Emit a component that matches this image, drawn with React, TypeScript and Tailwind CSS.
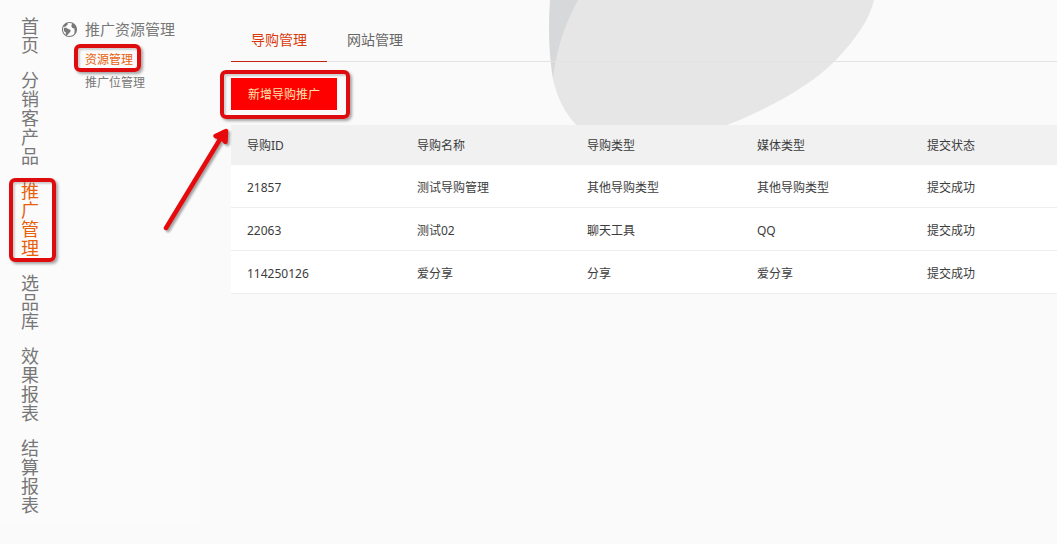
import { ImEarth } from "react-icons/im";

const mainNav = ["首页", "分销客产品", "推广管理", "选品库", "效果报表", "结算报表"];
const columns = ["导购ID", "导购名称", "导购类型", "媒体类型", "提交状态"];
const rows = [
  ["21857", "测试导购管理", "其他导购类型", "其他导购类型", "提交成功"],
  ["22063", "测试02", "聊天工具", "QQ", "提交成功"],
  ["114250126", "爱分享", "分享", "爱分享", "提交成功"],
];

const markClass =
  "pointer-events-none absolute rounded-md border-4 border-[#de0c0e] shadow-[2px_2px_3px_rgba(0,0,0,0.35),inset_2px_2px_2px_rgba(0,0,0,0.18)]";

function MainNav() {
  return (
    <nav aria-label="主导航" className="flex w-15 flex-col items-center gap-4 pt-[17px] pb-2">
      {mainNav.map((label) => {
        const active = label === "推广管理";
        return (
          <a
            key={label}
            href="#"
            aria-current={active ? "page" : undefined}
            className={`relative w-[18px] text-lg leading-[19px] break-all ${active ? "text-[#e8600c]" : "text-[#777]"}`}
          >
            {label}
            {active && <span className={`${markClass} -inset-y-1 -right-[17px] -left-3`} />}
          </a>
        );
      })}
    </nav>
  );
}

function SubNav() {
  return (
    <nav aria-label="推广资源" className="flex-1 pt-[17px]">
      <h2 className="flex items-center gap-2 pl-[2px] text-[15px] leading-6 text-[#777]">
        <ImEarth className="size-[15px]" />
        推广资源管理
      </h2>
      <ul className="pt-[7px] pl-[25px] text-xs leading-[23px]">
        <li>
          <a href="#" aria-current="page" className="relative inline-block text-[#e8600c]">
            资源管理
            <span className={`${markClass} -top-1 -right-2 -bottom-px -left-[11px]`} />
          </a>
        </li>
        <li>
          <a href="#" className="text-[#777]">推广位管理</a>
        </li>
      </ul>
    </nav>
  );
}

function Backdrop() {
  return (
    <svg
      aria-hidden="true"
      width="330"
      height="130"
      viewBox="545 0 330 130"
      className="absolute top-0 left-[314px]"
    >
      <path d="M550 0C548 28 549 56 553 79L590 60V0Z" fill="#d7d8da" />
      <path d="M578 0C562 30 556 54 553 79C557 98 565 113 577 126L580 130H715L727 125C773 107 812 84 835 61C857 38 870 18 874 0Z" fill="#e6e6e6" />
    </svg>
  );
}

function Arrow() {
  return (
    <svg
      aria-hidden="true"
      width="76"
      height="112"
      viewBox="160 124 76 112"
      fill="none"
      stroke="#e60a0c"
      strokeLinecap="round"
      strokeLinejoin="round"
      className="pointer-events-none absolute top-[124px] -left-[71px] drop-shadow-[2px_2px_1px_rgba(0,0,0,0.35)]"
    >
      <path d="M166 228L222 136" strokeWidth="4.5" />
      <path d="M215.500 136L226 131L225.500 142L222 138Z" strokeWidth="4.500" fill="#e60a0c" />
    </svg>
  );
}

export default function App() {
  return (
    <div className="flex min-h-screen items-start overflow-hidden bg-[#fafafa] font-['Noto_Sans','Noto_Sans_CJK_SC',sans-serif]">
      <aside className="flex w-[200px] shrink-0 bg-[#fbfbfb]">
        <MainNav />
        <SubNav />
      </aside>
      <main className="relative ml-[31px] min-w-0 flex-1">
        <Backdrop />
        <div role="tablist" className="relative flex border-b border-[#e3e3e3] pt-5 text-sm">
          <button role="tab" aria-selected="true" className="-mb-px border-b border-[#c81e14] px-5 pt-[9px] pb-[10px] leading-[22px] text-[#d93a0b]">
            导购管理
          </button>
          <button role="tab" aria-selected="false" className="px-5 pt-[9px] pb-[10px] leading-[22px] text-[#666]">
            网站管理
          </button>
        </div>
        <div className="relative mt-4 mb-[15px] flex">
          <div className="relative">
            <button className="block h-8 bg-[#f00] px-[17px] pt-0.5 text-xs text-[#ffe4b0]">新增导购推广</button>
            <span className={`${markClass} -top-2 -right-[13px] -bottom-[9px] -left-[11px]`} />
          </div>
        </div>
        <table className="relative w-full table-fixed border-separate border-spacing-0 text-left text-xs text-[#3c3c3c]">
          <thead className="bg-[#f1f1f1]">
            <tr className="h-10">
              {columns.map((c, i) => (
                <th key={c} scope="col" className={`pt-0.5 pl-4 font-normal ${i < 4 ? "w-[170px]" : ""}`}>
                  {c}
                </th>
              ))}
            </tr>
          </thead>
          <tbody className="bg-white">
            {rows.map((r) => (
              <tr key={r[0]} className="h-[43px]">
                {r.map((v, i) => (
                  <td key={i} className="border-b border-[#eee] pt-1 pl-4">{v}</td>
                ))}
              </tr>
            ))}
          </tbody>
        </table>
        <Arrow />
      </main>
    </div>
  );
}
